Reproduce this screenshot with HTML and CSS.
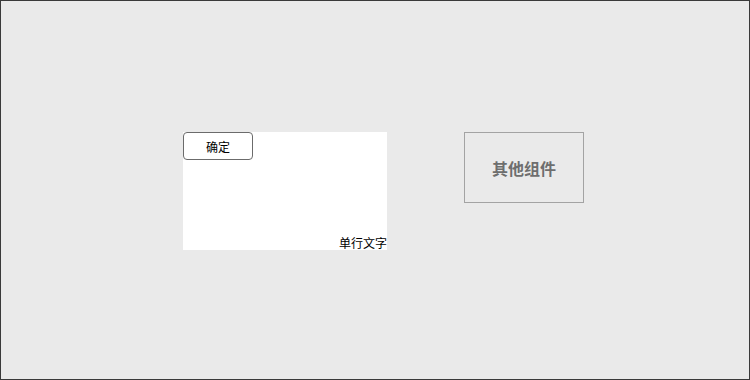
FILE: index.html
```html
<!DOCTYPE html>
<html lang="zh-CN">
<head>
    <meta charset="UTF-8">
    <title>组件布局</title>
    <link rel="stylesheet" href="styles.css">
</head>
<body>
    <div class="stage">
        <div class="panel">
            <button class="btn-ok">确定</button>
            <span class="caption">单行文字</span>
        </div>
        <div class="other-box">其他组件</div>
    </div>
</body>
</html>
```

FILE: styles.css
```css
body {
    margin: 0;
    font-family: "Noto Sans CJK SC", "Noto Sans", sans-serif;
}

.stage {
    box-sizing: border-box;
    width: 750px;
    height: 380px;
    border: 1px solid #3a3a3a;
    background-color: #eaeaea;
    display: flex;
    align-items: flex-start;
    gap: 77px;
    padding: 131px 0 0 182px;
}

.panel {
    width: 204px;
    height: 118px;
    background-color: #fff;
    display: flex;
    flex-direction: column;
    justify-content: space-between;
    align-items: flex-start;
}

.btn-ok {
    box-sizing: border-box;
    width: 70px;
    height: 28px;
    border: 1px solid #6b6b6b;
    border-radius: 4px;
    background-color: #fff;
    color: #000;
    font-family: inherit;
    font-size: 12px;
    padding: 0;
}

.caption {
    align-self: flex-end;
    font-size: 12px;
    line-height: 14px;
    color: #000;
}

.other-box {
    box-sizing: border-box;
    width: 120px;
    height: 71px;
    border: 1px solid #a3a3a3;
    display: flex;
    align-items: center;
    justify-content: center;
    font-size: 16px;
    font-weight: bold;
    color: #6e6e6e;
}
```
